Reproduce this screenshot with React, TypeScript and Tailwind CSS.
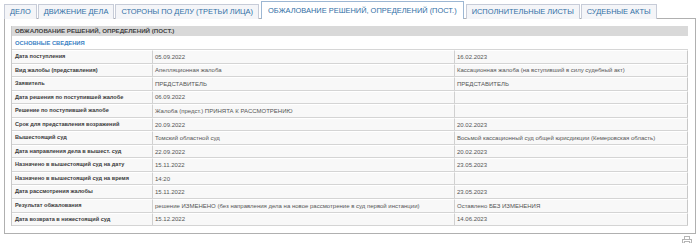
import React from "react";

const tabs = [
  { label: "ДЕЛО" },
  { label: "ДВИЖЕНИЕ ДЕЛА" },
  { label: "СТОРОНЫ ПО ДЕЛУ (ТРЕТЬИ ЛИЦА)" },
  { label: "ОБЖАЛОВАНИЕ РЕШЕНИЙ, ОПРЕДЕЛЕНИЙ (ПОСТ.)", active: true },
  { label: "ИСПОЛНИТЕЛЬНЫЕ ЛИСТЫ" },
  { label: "СУДЕБНЫЕ АКТЫ" },
];

const rows: [string, string, string][] = [
  ["Дата поступления", "05.09.2022", "16.02.2023"],
  ["Вид жалобы (представления)", "Апелляционная жалоба", "Кассационная жалоба (на вступивший в силу судебный акт)"],
  ["Заявитель", "ПРЕДСТАВИТЕЛЬ", "ПРЕДСТАВИТЕЛЬ"],
  ["Дата решения по поступившей жалобе", "06.09.2022", ""],
  ["Решение по поступившей жалобе", "Жалоба (предст.) ПРИНЯТА К РАССМОТРЕНИЮ", ""],
  ["Срок для представления возражений", "20.09.2022", "20.02.2023"],
  ["Вышестоящий суд", "Томский областной суд", "Восьмой кассационный суд общей юрисдикции (Кемеровская область)"],
  ["Дата направления дела в вышест. суд", "22.09.2022", "20.02.2023"],
  ["Назначено в вышестоящий суд на дату", "15.11.2022", "23.05.2023"],
  ["Назначено в вышестоящий суд на время", "14:20", ""],
  ["Дата рассмотрения жалобы", "15.11.2022", "23.05.2023"],
  ["Результат обжалования", "решение ИЗМЕНЕНО (без направления дела на новое рассмотрение в суд первой инстанции)", "Оставлено БЕЗ ИЗМЕНЕНИЯ"],
  ["Дата возврата в нижестоящий суд", "15.12.2022", "14.06.2023"],
];

function PrinterIcon() {
  return (
    <svg width="10" height="9" viewBox="0 0 10 9" fill="none" stroke="#b5b5b5" strokeWidth="1">
      <rect x="2.5" y="0.5" width="5" height="3" />
      <rect x="0.5" y="3.5" width="9" height="3.5" />
      <rect x="2.5" y="5.5" width="5" height="3" fill="#fff" />
    </svg>
  );
}

export default function App() {
  return (
    <div className="w-[700px] h-[243px] bg-white overflow-hidden" style={{ fontFamily: "'Liberation Sans', Arial, sans-serif" }}>
      <div className="flex items-end gap-[1px] pl-[4px] pt-[1px] h-[19px] relative z-10">
        {tabs.map((t) =>
          t.active ? (
            <div
              key={t.label}
              className="h-[18px] px-[6px] flex items-center bg-white border border-b-0 border-[#9db7d3] text-[#2f6ea5] text-[7.45px] whitespace-nowrap mx-[1px]"
            >
              {t.label}
            </div>
          ) : (
            <div
              key={t.label}
              className="h-[15px] px-[5px] flex items-center bg-[#f4f5f8] border border-b-0 border-[#c7ccd8] text-[#2f6ea5] text-[7.45px] whitespace-nowrap"
            >
              {t.label}
            </div>
          )
        )}
      </div>
      <div className="mx-[4px] w-[692px] h-[216px] border border-[#b0b0b0] bg-white pt-[7px] px-[6px] -mt-[1px]">
        <div className="w-[677px] border-l border-[#c8c8c8]">
          <div className="h-[11px] bg-[#d9d9d9] border-b border-white flex items-center pl-[3px] text-[6.2px] font-bold text-[#444]">
            ОБЖАЛОВАНИЕ РЕШЕНИЙ, ОПРЕДЕЛЕНИЙ (ПОСТ.)
          </div>
          <div className="h-[13px] flex items-center pl-[3px] text-[5.8px] font-bold text-[#3b82c4] border-b border-[#d6d6d6]">
            ОСНОВНЫЕ СВЕДЕНИЯ
          </div>
          {rows.map(([a, b, c]) => (
            <div key={a} className="grid grid-cols-[141px_302px_233px] h-[13.55px] bg-[#f8f8f8] border-b border-[#d4d4d4] text-[6px] leading-none">
              <div className="flex items-center pl-[3px] font-bold text-[5.6px] text-[#3c3c3c] border-r border-[#d0d0d0] border-t border-t-white whitespace-nowrap">{a}</div>
              <div className="flex items-center pl-[2px] text-[#555] border-r border-[#d0d0d0] border-t border-t-white whitespace-nowrap">{b}</div>
              <div className="flex items-center pl-[2px] text-[#555] border-r border-[#c8c8c8] border-t border-t-white whitespace-nowrap">{c}</div>
            </div>
          ))}
        </div>
      </div>
      <div className="flex justify-end pr-[8px] pt-[2px]">
        <PrinterIcon />
      </div>
    </div>
  );
}
